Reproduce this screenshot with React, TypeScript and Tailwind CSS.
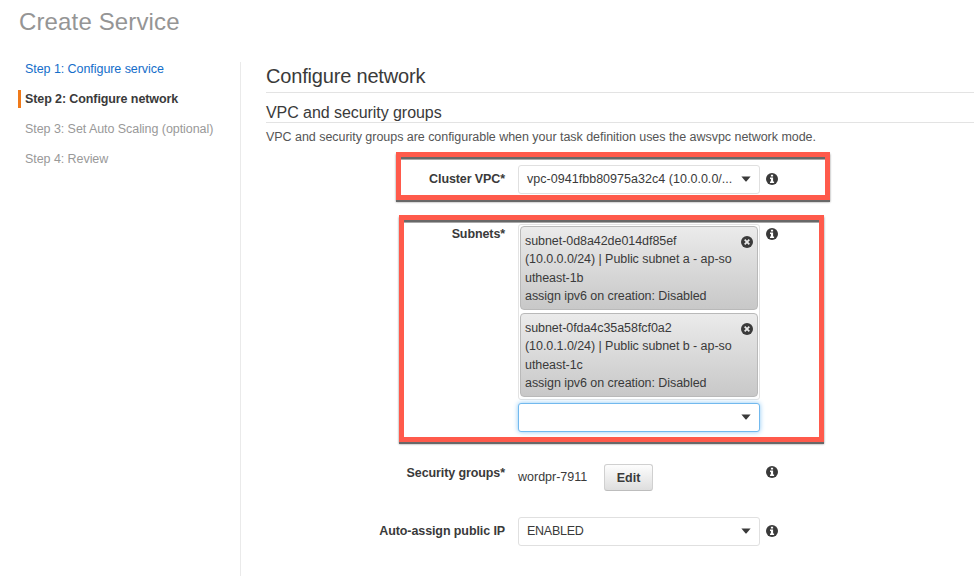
import type { ReactNode } from "react";

function InfoIcon({ className = "" }: { className?: string }) {
  return (
    <svg viewBox="0 0 12 12" className={`h-3 w-3 shrink-0 ${className}`} aria-label="Info">
      <circle cx="6" cy="6" r="6" fill="#3a3a3a" />
      <path d="M4.9 1.7h2.2v1.8H4.9zM4 4.4h3.1v4h1V10H4V8.4h.9V6H4z" fill="#fff" />
    </svg>
  );
}

function RemoveIcon() {
  return (
    <svg viewBox="0 0 12 12" className="mt-[9px] h-3 w-3 shrink-0" aria-label="Remove">
      <circle cx="6" cy="6" r="6" fill="#3a3a3a" />
      <path d="M3.7 3.7l4.6 4.6M8.3 3.7l-4.6 4.6" stroke="#e8e8e8" strokeWidth="1.8" />
    </svg>
  );
}

function Caret() {
  return (
    <svg viewBox="0 0 10 6" className="-mt-px h-[6px] w-[10px] shrink-0" aria-hidden="true">
      <path d="M.4 .6h9.2L5.6 5.2q-.6 .5-1.2 0z" fill="#3a3a3a" />
    </svg>
  );
}

function Row({ label, top, labelTop, iconTop, children }: { label: string; top: string; labelTop: string; iconTop: string; children: ReactNode }) {
  return (
    <div className={`flex items-start ${top}`}>
      <div className={`mr-[13px] w-[239px] text-right text-[12.5px] leading-[18px] font-bold tracking-[-0.1px] whitespace-nowrap ${labelTop}`}>{label}</div>
      <div className="w-[242px] shrink-0">{children}</div>
      <InfoIcon className={`ml-[6px] ${iconTop}`} />
    </div>
  );
}

function Select({ value, tracking }: { value: string; tracking: string }) {
  return (
    <div className="flex h-[29px] items-center justify-between rounded-[3px] border border-[#e0e0e0] bg-white pr-[8px] pl-[8px] text-[12.5px] whitespace-nowrap">
      <span className={tracking}>{value}</span>
      <Caret />
    </div>
  );
}

function Subnet({ lines }: { lines: string[] }) {
  return (
    <div className="flex h-[84px] justify-between rounded-[4px] border border-[#b9b9b9] bg-linear-to-b from-[#ebebeb] to-[#c8c8c8] pr-[4px] pl-[4px]">
      <div className="pt-[5px] text-[12.5px] leading-[18.4px] tracking-[-0.06px] whitespace-nowrap">
        {lines.map((line) => (
          <div key={line}>{line}</div>
        ))}
      </div>
      <RemoveIcon />
    </div>
  );
}

function Highlight({ className }: { className: string }) {
  return (
    <div
      className={`pointer-events-none absolute border-[5px] border-[#ff5a4b] shadow-[0_2px_0_0_#686868,0_2px_2px_0_#888,inset_0_2px_0_0_#686868,inset_0_3px_0_0_#a8a8a8] ${className}`}
    />
  );
}

export default function App() {
  return (
    <div className="relative h-[577px] w-[974px] overflow-hidden bg-white font-['Liberation_Sans',Arial,sans-serif] text-[#3a3a3a]">
      <h1 className="h-[62px] pt-[8px] pl-[19px] text-[24px] leading-[28px] tracking-[0.14px] text-[#959595]">Create Service</h1>
      <div className="flex h-[514px]">
        <nav className="w-[241px] shrink-0 border-r border-[#eaeaea] pl-[18px] text-[12.5px] leading-[18px] tracking-[-0.06px] whitespace-nowrap">
          <div className="-mt-[2px] pl-[7px] text-[#146eca]">Step 1: Configure service</div>
          <div className="mt-[12px] flex h-[18px] items-center border-l-[3px] border-[#f07a1a] pl-[4px] font-bold tracking-[-0.1px]">Step 2: Configure network</div>
          <div className="mt-[12px] pl-[7px] text-[#999]">Step 3: Set Auto Scaling (optional)</div>
          <div className="mt-[12px] pl-[7px] text-[#999]">Step 4: Review</div>
        </nav>
        <main className="w-[733px] pl-[25px]">
          <h2 className="h-[31px] border-b border-[#e3e3e3] pt-[2px] text-[20px] leading-[24px] tracking-[-0.18px]">Configure network</h2>
          <h3 className="h-[30px] border-b border-[#e3e3e3] pt-[10px] text-[16px] leading-[20px] tracking-[-0.06px]">VPC and security groups</h3>
          <p className="h-[42px] pt-[5px] text-[12.5px] leading-[18px] tracking-[-0.04px] whitespace-nowrap text-[#555]">
            VPC and security groups are configurable when your task definition uses the awsvpc network mode.
          </p>
          <Row label="Cluster VPC*" top="h-[59px]" labelTop="pt-[5px]" iconTop="mt-[8px]">
            <Select value="vpc-0941fbb80975a32c4 (10.0.0.0/..." tracking="tracking-[0.03px]" />
          </Row>
          <Row label="Subnets*" top="h-[240px]" labelTop="pt-[1px]" iconTop="mt-[4px]">
            <div className="flex h-[176px] flex-col gap-[3px] rounded-[3px] border border-[#e3e3e3] px-px pt-px">
              <Subnet lines={["subnet-0d8a42de014df85ef", "(10.0.0.0/24) | Public subnet a - ap-so", "utheast-1b", "assign ipv6 on creation: Disabled"]} />
              <Subnet lines={["subnet-0fda4c35a58fcf0a2", "(10.0.1.0/24) | Public subnet b - ap-so", "utheast-1c", "assign ipv6 on creation: Disabled"]} />
            </div>
            <div className="mt-[3px] flex h-[29px] items-center justify-end rounded-[3px] border border-[#72b9ee] bg-white pr-[8px] shadow-[0_0_5px_#8cc8f5]">
              <Caret />
            </div>
          </Row>
          <Row label="Security groups*" top="h-[53px]" labelTop="pt-0" iconTop="mt-[2px]">
            <div className="flex items-start">
              <span className="w-[86px] pt-[4px] text-[12.5px] leading-[18px]">wordpr-7911</span>
              <button className="h-[27px] w-[49px] rounded-[3px] border border-[#d0d0d0] border-b-[#bdbdbd] bg-linear-to-b from-[#fdfdfd] to-[#dedede] pt-px text-[12.5px] font-bold">Edit</button>
            </div>
          </Row>
          <Row label="Auto-assign public IP" top="h-[29px]" labelTop="pt-[5px]" iconTop="mt-[8px]">
            <Select value="ENABLED" tracking="tracking-[-0.25px]" />
          </Row>
        </main>
      </div>
      <Highlight className="top-[152px] left-[396px] h-[48px] w-[434px]" />
      <Highlight className="top-[215px] left-[399px] h-[227px] w-[425px]" />
    </div>
  );
}
